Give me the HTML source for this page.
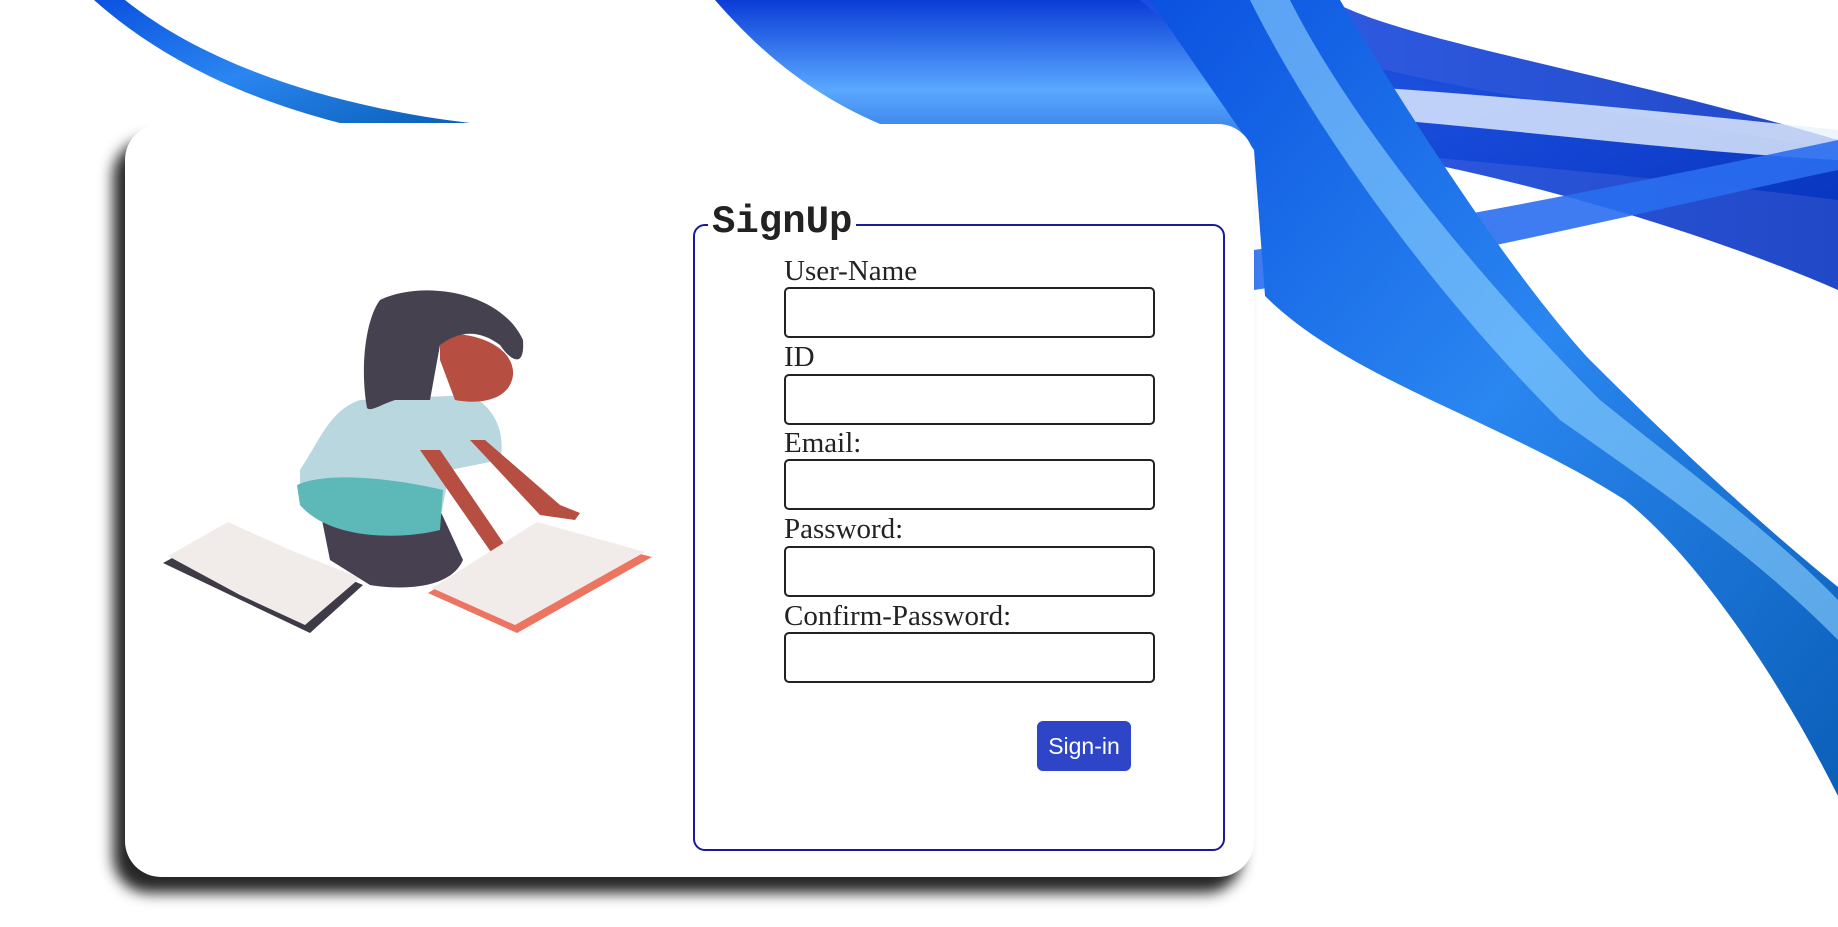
<!DOCTYPE html>
<html><head><meta charset="utf-8"><style>
html,body{margin:0;padding:0;width:1838px;height:927px;overflow:hidden;background:#fff;position:relative}
.bg{position:absolute;left:0;top:0}
.card{position:absolute;left:125px;top:124px;width:1129px;height:753px;background:#fff;border-radius:36px;box-shadow:-12px 16px 14px rgba(0,0,0,.85)}
.fs{position:absolute;left:693px;top:224px;width:528px;height:623px;border:2px solid #1a1a9a;border-radius:12px}
.lg{position:absolute;left:708px;top:200px;background:#fff;padding:0 4px;font:bold 39px/44px "Liberation Mono",monospace;color:#222}
.lb{position:absolute;left:784px;font:29px/28px "Liberation Serif",serif;color:#222}
.in{position:absolute;left:784px;width:367px;height:47px;border:2px solid #222;border-radius:5px;background:#fff}
.btn{position:absolute;left:1037px;top:721px;width:94px;height:50px;background:#2e45c8;border-radius:6px;color:#fff;font:23px/50px "Liberation Sans",sans-serif;text-align:center}
</style></head><body>
<svg class="bg" width="1838" height="927" viewBox="0 0 1838 927">
<defs>
<linearGradient id="g1" x1="0" y1="0" x2="0" y2="1"><stop offset="0" stop-color="#0a3cd6"/><stop offset=".45" stop-color="#5aa8ff"/><stop offset="1" stop-color="#0848c8"/></linearGradient>
<linearGradient id="g2" x1="0" y1="0" x2="1" y2="1"><stop offset="0" stop-color="#0b52e0"/><stop offset=".5" stop-color="#2a86f0"/><stop offset="1" stop-color="#0a5fb8"/></linearGradient>
<linearGradient id="g3" x1="0" y1="0" x2="1" y2="0"><stop offset="0" stop-color="#1d4fe8"/><stop offset="1" stop-color="#0834c0"/></linearGradient>
</defs>
<path d="M94 0 L125 0 C200 60 320 105 470 123 L340 123 C230 95 150 50 94 0Z" fill="url(#g2)"/>
<path d="M715 0 L1172 0 C1250 40 1400 80 1600 110 L1838 150 L1838 200 C1600 170 1350 150 1100 130 L880 124 C800 90 750 40 715 0Z" fill="url(#g1)"/>
<path d="M1140 0 L1330 0 C1400 40 1600 70 1838 140 L1838 290 C1700 230 1500 170 1300 140 Z" fill="url(#g3)" opacity=".9"/>
<path d="M1254 80 C1450 90 1650 110 1838 130 L1838 160 C1650 150 1450 120 1254 110Z" fill="#e8f2ff" opacity=".8"/>
<path d="M1254 250 C1450 220 1650 180 1838 140 L1838 170 C1650 210 1450 260 1254 290Z" fill="#2a6ef0" opacity=".9"/>
<path d="M1150 0 L1340 0 C1400 100 1500 260 1587 357 C1700 470 1780 540 1838 587 L1838 796 C1780 680 1700 560 1625 500 C1500 420 1350 380 1265 296 L1254 150 Z" fill="url(#g2)"/>
<path d="M1250 0 L1290 0 C1350 120 1480 280 1600 400 C1700 480 1780 540 1838 600 L1838 640 C1760 560 1660 490 1560 420 C1440 300 1320 140 1250 0Z" fill="#8fd4ff" opacity=".6"/>
</svg>
<div class="card"></div>
<svg style="position:absolute;left:0;top:0" width="700" height="700" viewBox="0 0 700 700">
<path d="M163 563 L227 528 L363 585 L310 633 Z" fill="#3e3a46"/>
<path d="M168 556 L228 522 L290 550 L360 578 L305 625 L240 595 Z" fill="#f1ecea"/>
<path d="M322 520 C330 500 380 500 440 510 L463 560 C450 590 400 590 370 585 L330 560 Z" fill="#464050"/>
<path d="M300 470 C320 440 330 410 360 400 L470 395 C500 410 505 440 500 460 L450 470 L440 520 C400 540 330 540 300 500 Z" fill="#b9d7de"/>
<path d="M297 485 C330 470 400 480 443 490 L440 530 C400 540 330 540 300 505 Z" fill="#5db8b8"/>
<path d="M420 450 L440 450 L515 560 L500 565 Z" fill="#b74e42"/>
<path d="M470 440 L485 440 L560 505 L580 513 L575 520 L540 515 Z" fill="#b74e42"/>
<path d="M440 335 C470 330 515 345 513 375 C510 400 480 405 455 400 L440 360 Z" fill="#b74e42"/>
<path d="M380 300 C420 280 500 290 523 340 C525 370 510 360 500 345 C480 330 460 330 440 345 L430 400 L395 400 C380 405 370 412 367 408 C360 370 365 320 380 300Z" fill="#46414e"/>
<path d="M428 593 L537 527 L652 557 L517 633 Z" fill="#ee7462"/>
<path d="M432 588 L537 522 L645 552 L515 625 Z" fill="#f1ecea"/>
</svg>
<div class="fs"></div>
<div class="lg">SignUp</div>
<div class="lb" style="top:257px">User-Name</div>
<div class="in" style="top:287px"></div>
<div class="lb" style="top:343px">ID</div>
<div class="in" style="top:374px"></div>
<div class="lb" style="top:429px">Email:</div>
<div class="in" style="top:459px"></div>
<div class="lb" style="top:515px">Password:</div>
<div class="in" style="top:546px"></div>
<div class="lb" style="top:602px">Confirm-Password:</div>
<div class="in" style="top:632px"></div>
<div class="btn">Sign-in</div>
</body></html>
